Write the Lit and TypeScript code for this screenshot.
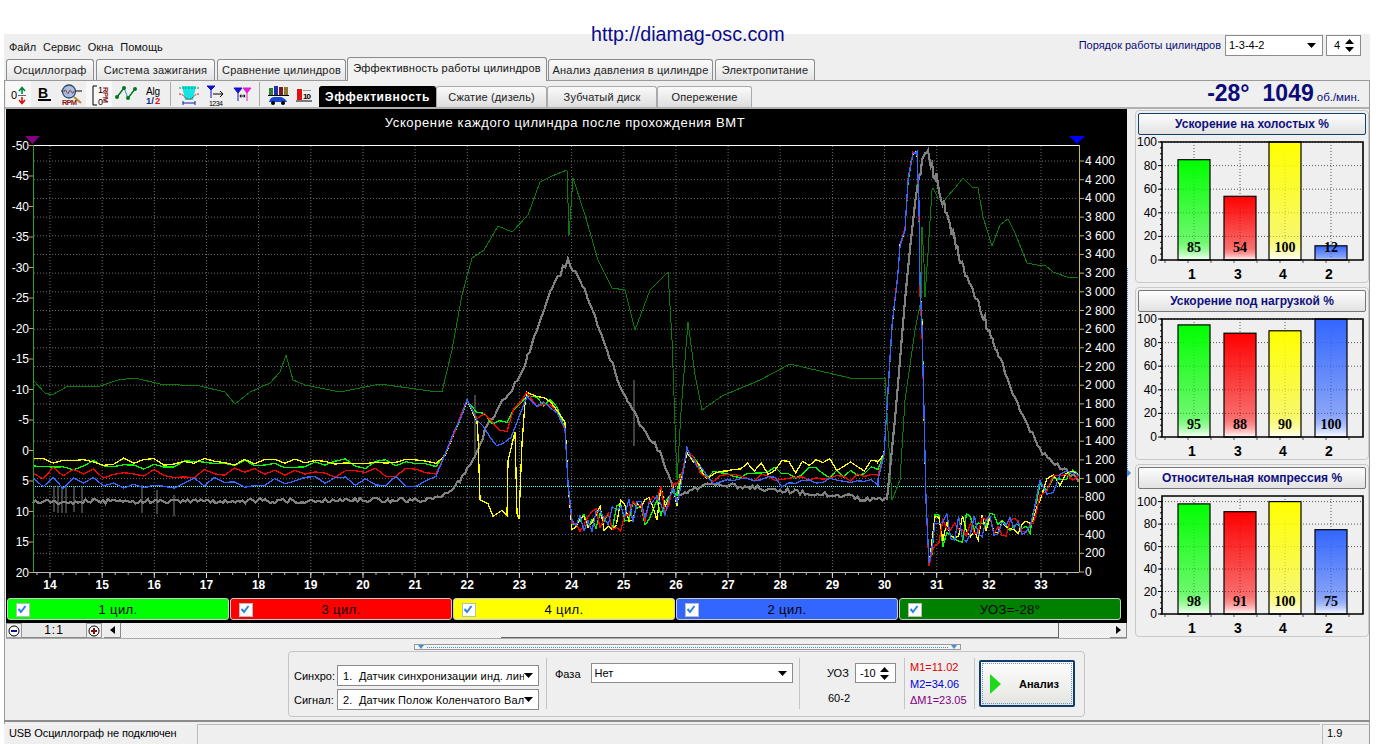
import { LitElement, html, svg, css } from 'lit';
import { customElement, property } from 'lit/decorators.js';

// anchor = [x, y, noise amplitude]
type Anchor = [number, number, number];

function rng(seed: number) {
  return () => {
    seed = (seed + 0x6d2b79f5) | 0;
    let t = Math.imul(seed ^ (seed >>> 15), 1 | seed);
    t = (t + Math.imul(t ^ (t >>> 7), 61 | t)) ^ t;
    return ((t ^ (t >>> 14)) >>> 0) / 4294967296;
  };
}

// walk along the anchors and shake the line a bit, the way the measured signal does
function noisy(anchors: Anchor[], seed: number, stepOf: (x: number) => number) {
  const r = rng(seed);
  const pts: string[] = [];
  for (let i = 0; i < anchors.length - 1; i++) {
    const [x0, y0, n0] = anchors[i];
    const [x1, y1, n1] = anchors[i + 1];
    const step = stepOf(x0);
    const count = Math.max(1, Math.round((x1 - x0) / step));
    for (let k = 0; k < count; k++) {
      const t = k / count;
      const amp = n0 + (n1 - n0) * t;
      const x = x0 + (x1 - x0) * t;
      const y = y0 + (y1 - y0) * t + (r() * 2 - 1) * amp;
      pts.push(`${x.toFixed(1)},${y.toFixed(1)}`);
    }
  }
  const last = anchors[anchors.length - 1];
  pts.push(`${last[0]},${last[1]}`);
  return pts.join(' ');
}

const stepCyl = (x: number) => (x < 440 ? 10 : x > 885 && x < 925 ? 2 : x > 565 && x < 700 ? 4 : x > 925 && x < 1040 ? 4 : 7);
const stepGrey = (x: number) => (x > 890 && x < 1000 ? 1.5 : 2.5);

const riseA: Anchor[] = [
  [445, 455, 1], [455, 430, 2], [467, 402, 3], [477, 417, 5],
];
const midA: Anchor[] = [
  [527, 394, 4], [537, 402, 6], [557, 408, 8], [565, 427, 6], [568, 483, 1],
  [572, 525, 5], [600, 520, 16], [633, 515, 18], [653, 505, 18], [677, 495, 12],
  [683, 470, 4], [687, 450, 3], [697, 465, 4], [707, 478, 3],
];
const peakA = (dy: number): Anchor[] => [
  [878, 476 + dy, 2], [884, 455, 1], [892, 327, 2], [898, 273, 2], [900, 247, 2], [905, 230, 3],
  [908, 180, 3], [913, 153, 1], [917, 152, 1], [919, 207, 6], [920, 287, 10], [922, 327, 6],
  [926, 500, 2], [929, 565, 3],
  [935, 530, 18], [990, 525, 13], [1030, 528, 6], [1040, 490, 12], [1060, 478, 10], [1079, 475, 4],
];

const traces = [
  {
    color: '#00ff00',
    pts: noisy([[33, 466, 6], [436, 463, 5], ...riseA, [507, 422, 8], ...midA, [720, 472, 6], [878, 472, 6], ...peakA(-8)], 11, stepCyl),
  },
  {
    color: '#ffff00',
    pts: noisy([
      [33, 462, 4], [436, 461, 3], ...riseA,
      [478, 437, 1], [480, 500, 1], [488, 503, 1], [493, 517, 1], [502, 510, 1], [507, 515, 1], [508, 460, 1],
      [515, 433, 1], [517, 513, 1], [519, 519, 1], [522, 443, 1], [525, 403, 1],
      ...midA, [720, 468, 8], [878, 465, 7], ...peakA(-14),
    ], 23, stepCyl),
  },
  {
    color: '#ff0000',
    pts: noisy([[33, 473, 6], [436, 472, 5], ...riseA, [507, 425, 8], ...midA, [720, 478, 5], [878, 478, 4], ...peakA(0)], 37, stepCyl),
  },
  {
    color: '#3366ff',
    pts: noisy([[33, 483, 6], [436, 481, 6], ...riseA, [490, 435, 3], [503, 450, 8], ...midA, [720, 482, 6], [878, 482, 5], ...peakA(4)], 53, stepCyl),
  },
];

const greyLine = noisy([
  [33, 502, 2.5], [430, 500, 2.5], [445, 493, 2.5], [460, 482, 3], [475, 455, 3], [490, 420, 3], [505, 398, 3],
  [520, 378, 3], [535, 335, 3], [550, 290, 3], [568, 260, 4], [585, 292, 3], [600, 330, 3], [620, 385, 3],
  [640, 425, 3], [660, 452, 3], [675, 495, 2.5], [690, 490, 2.5], [710, 484, 2.5], [740, 486, 2.5], [800, 492, 2.5],
  [880, 500, 2.5], [887, 498, 1], [895, 420, 1], [905, 300, 1], [915, 200, 4], [925, 150, 7], [935, 175, 7],
  [950, 225, 5], [965, 275, 5], [985, 320, 5], [1000, 358, 4], [1020, 410, 3], [1040, 450, 3], [1060, 466, 3], [1079, 482, 3],
], 71, stepGrey);

const greySpikes: [number, number, number][] = [
  [54, 486, 512], [58, 486, 513], [62, 486, 513], [66, 486, 513], [74, 486, 512], [82, 486, 513],
  [142, 485, 513], [157, 490, 514], [174, 495, 516], [475, 395, 458], [634, 380, 446],
];

const dark: [number, number][] = [
  [33, 380], [45, 393], [52, 395], [68, 386], [100, 386], [118, 380], [135, 378], [160, 384], [200, 386], [225, 392],
  [235, 404], [250, 392], [270, 383], [280, 372], [286, 355], [293, 380], [305, 385], [340, 392], [380, 384], [430, 391],
  [442, 392], [452, 350], [462, 295], [472, 258], [484, 250], [498, 226], [512, 232], [528, 215], [540, 182], [552, 176],
  [567, 170], [569, 235], [573, 178], [585, 215], [598, 260], [612, 288], [625, 290], [635, 330], [650, 290], [668, 272],
  [672, 340], [677, 480], [681, 412], [688, 322], [695, 375], [702, 410], [722, 396], [760, 380], [790, 364], [850, 378],
  [885, 378], [892, 500], [900, 480], [905, 400], [915, 330], [921, 300], [922, 227], [924, 263], [925, 297], [928, 253],
  [932, 190], [933, 188], [938, 198], [943, 203], [947, 197], [955, 188], [963, 178], [972, 187], [978, 188], [983, 217],
  [992, 246], [1000, 225], [1008, 219], [1015, 233], [1027, 263], [1042, 266], [1045, 265], [1053, 272], [1067, 277], [1078, 277],
];

const xLabels = Array.from({ length: 20 }, (_, i) => 14 + i);
const xPos = (n: number) => 50 + (n - 14) * 52.16;
const rpmY = (k: number) => 572 - k * 18.68;
const leftLabels = [-50, -45, -40, -35, -30, -25, -20, -15, -10, -5, 0, 5, 10, 15, 20];

const tabs = [
  ['Осциллограф', 90], ['Система зажигания', 121], ['Сравнение цилиндров', 131],
  ['Эффективность работы цилиндров', 200], ['Анализ давления в цилиндре', 167], ['Электропитание', 102],
] as [string, number][];

const subTabs = [
  ['Эффективность', 117], ['Сжатие (дизель)', 111], ['Зубчатый диск', 110], ['Опережение', 95],
] as [string, number][];

const legend = [
  ['1 цил.', '#00ff00'], ['3 цил.', '#ff0000'], ['4 цил.', '#ffff00'], ['2 цил.', '#3366ff'], ['УОЗ=-28°', '#008000'],
];

const arrowDown = html`<svg class="drop" width="9" height="5" viewBox="0 0 9 5"><path d="M0 0h9L4.5 5z" fill="#000"/></svg>`;
const spinArrows = html`<svg class="spin-arrows" width="11" height="15" viewBox="0 0 11 15"><path d="M1 6h9L5.500 1zM1 9h9l-4.500 5z" fill="#000"/></svg>`;

// toolbar icons, local y = screen y - 82
const icons = [
  svg`<text x="5" y="16.500" font-size="11" fill="#000">0</text><path d="M16 12V6M13 9l3-3.500 3 3.500" stroke="#00863c" stroke-width="1.600" fill="none"/><path d="M12 13.500h8" stroke="#666"/><path d="M16 15v6M13 18l3 3.500 3-3.500" stroke="#e01010" stroke-width="1.600" fill="none"/>`,
  svg`<text x="7" y="15.500" font-size="14" font-weight="700" font-family="Liberation Serif" fill="#000">B</text><rect x="7" y="17" width="13" height="2" fill="#000"/>`,
  svg`<path d="M3 9h21" stroke="#000"/><circle cx="11" cy="9.500" r="6.500" fill="#a9bde0" stroke="#2c4a6a" stroke-width="1.300"/><path d="M6 10c2-7 3 6 5 0s3 6 5-1" stroke="#7a2020" fill="none" stroke-width=".8"/><path d="M16 15l7 6" stroke="#b98a30" stroke-width="2.200"/><text x="4" y="23" font-size="7.500" font-weight="700" fill="#8a1c1c" textLength="15">RPM</text>`,
  svg`<path d="M11 4H7v19h4" stroke="#000" fill="none"/><text x="12" y="11" font-size="9" fill="#000">1</text><text x="12" y="23" font-size="9" fill="#000">0</text><text transform="translate(17,5) rotate(90)" font-size="7.500" font-weight="700" fill="#8a1c1c" textLength="16">RPM</text>`,
  svg`<path d="M5 15L12 6l4 10 7-9" fill="none" stroke="#2f8cc9"/><path d="M5 15L12 6M16 16l7-9" fill="none" stroke="#00761e" stroke-width="1.300"/><circle cx="5" cy="15" r="2" fill="#00761e"/><circle cx="12" cy="6" r="2" fill="#00761e"/><circle cx="16" cy="16" r="2" fill="#00761e"/><circle cx="23" cy="7" r="2" fill="#00761e"/>`,
  svg`<text x="6" y="13" font-size="10" fill="#000" textLength="14">Alg</text><text x="6" y="22" font-size="9.500" font-weight="700" fill="#102c90">1/</text><text x="15" y="22" font-size="9.500" font-weight="700" fill="#e01010">2</text>`,
  svg`<path d="M8 4h14l-3 14H11z" fill="#19e4e4"/><path d="M5 6h20" stroke="#1a8a3a" stroke-dasharray="2 1"/><path d="M5 12c6 0 5 5 10 5s4-5 10-5" stroke="#d01010" fill="none" stroke-dasharray="2 1"/><path d="M9 21h12M9 19v4M21 19v4" stroke="#1020a0"/>`,
  svg`<path d="M4 4h8L8 8zM8 8v8" fill="#1010d0" stroke="#1010d0"/><path d="M10 12h10m-3-3 3 3-3 3" stroke="#000" fill="none"/><text x="6" y="24" font-size="7" fill="#000" textLength="14">1234</text>`,
  svg`<path d="M6 6h8l-4 5zM10 11v8" fill="#1010d0" stroke="#1010d0"/><path d="M15 6h8l-4 5zM19 11v8" fill="#e020d0" stroke="#e020d0"/><path d="M12 14h5m-4-1.500-1 1.500 1 1.500m3-3 1 1.500-1 1.500" stroke="#000" fill="none"/>`,
  svg`<rect x="6" y="6" width="4" height="7" fill="#2e7d32"/><rect x="11" y="4" width="4" height="9" fill="#2030b0"/><rect x="16" y="5" width="4" height="8" fill="#7a1c1c"/><rect x="21" y="5" width="4" height="8" fill="#8a7a30"/><path d="M5 13.500h21" stroke="#000"/><path d="M6 20c1-4 3-5 6-5h5c2 0 6 2 7 5z" fill="#1446d0"/><circle cx="10" cy="21" r="2" fill="#000"/><circle cx="20" cy="21" r="2" fill="#000"/>`,
  svg`<rect x="5" y="7" width="5" height="11" fill="#e01010"/><rect x="11" y="8" width="8" height="1" fill="#999"/><text x="11" y="17" font-size="8" font-weight="700" fill="#000" textLength="8">10</text><path d="M4 19h16" stroke="#000"/>`,
];
const iconSlots: [number, number][] = [
  [25, 0], [27, 1], [28, 2], [26, 3], [28, 4], [30, 5],
];
const iconSlots2: [number, number][] = [[29, 6], [25, 7], [26, 8]];
const iconSlots3: [number, number][] = [[29, 9], [25, 10]];

@customElement('bar-panel')
class BarPanel extends LitElement {
  @property() heading = '';
  @property({ type: Array }) values: number[] = [];
  @property({ type: Number }) plotH = 118;
  @property({ type: Number }) scaleTop = 100;
  @property({ type: Boolean }) focusBtn = false;

  static styles = css`
    :host {
      display: block;
      border: 1px solid #c9c9c9;
      border-radius: 4px;
      padding: 2px 1px 0;
      height: 173px;
      box-sizing: border-box;
    }
    .head {
      height: 22px;
      margin: 0 1px;
      box-sizing: border-box;
      border: 1px solid #777;
      border-radius: 2px;
      background: linear-gradient(#fdfdfd, #e2e2e2);
      color: #10107c;
      font: 700 12px "Liberation Sans", Arial, sans-serif;
      display: flex;
      align-items: center;
      justify-content: center;
    }
    .head.focus { border-color: #10406c; }
    svg { display: block; }
    text { font-family: "Liberation Sans", Arial, sans-serif; }
    .tick { font-size: 12px; fill: #000; text-anchor: end; }
    .cat { font-size: 14px; font-weight: 700; fill: #000; text-anchor: middle; }
    .val { font-family: "Liberation Serif", serif; font-size: 14px; font-weight: 700; fill: #000; text-anchor: middle; }
  `;

  render() {
    const h = this.plotH;
    const base = h + 3;
    const px = h / this.scaleTop;
    const left = 25;
    const right = 226;
    const bars = [41, 87, 132, 178];
    const cats = ['1', '3', '4', '2'];
    const cols = ['#00ff00', '#ff0000', '#ffff00', '#3366ff'];
    const ticks = [0, 20, 40, 60, 80, 100];
    const minor = Array.from({ length: 21 }, (_, i) => i * 5);
    const bottom = Array.from({ length: 9 }, (_, i) => left + 3 + i * 23);
    return html`
      <div class="head ${this.focusBtn ? 'focus' : ''}">${this.heading}</div>
      <svg width="230" height="${h + 30}" viewBox="0 -4 230 ${h + 30}">
        <defs>
          ${cols.map((c, i) => svg`<linearGradient id="g${i}" x1="0" y1="0" x2="0" y2="1"><stop offset="0" stop-color="${c}"/><stop offset=".8" stop-color="${c}" stop-opacity=".55"/><stop offset="1" stop-color="#fff"/></linearGradient>`)}
        </defs>
        ${minor.map((t) => svg`<path d="M${left - 2} ${(base - t * px).toFixed(1)}h2" stroke="#000"/>`)}
        ${bottom.map((x) => svg`<path d="M${x} ${base}v3" stroke="#555"/>`)}
        ${ticks.map((t) => svg`
          <path d="M${left - 4} ${(base - t * px).toFixed(1)}h4" stroke="#000"/>
          ${t > 0 ? svg`<path d="M${left} ${(base - t * px).toFixed(1)}H${right}" stroke="#555" stroke-dasharray="1 2"/>` : ''}
          <text class="tick" x="${left - 5}" y="${(base - t * px + 4).toFixed(1)}">${t}</text>`)}
        ${bars.map((b) => svg`<path d="M${b + 16} 3V${base}" stroke="#555" stroke-dasharray="1 2"/>`)}
        ${this.values.map((v, i) => {
          const t = base - v * px;
          return svg`
            <rect x="${bars[i]}" y="${t.toFixed(1)}" width="32" height="${(base - t).toFixed(1)}" fill="url(#g${i})" stroke="#000" stroke-width="1.200"/>
            <text class="val" x="${bars[i] + 16}" y="${base - 8}">${v}</text>
            <text class="cat" x="${bars[i] + 14}" y="${base + 19}">${cats[i]}</text>`;
        })}
        <path d="M${left} ${base}H${right}V3H${left}Z" fill="none" stroke="#000" stroke-width="1.600"/>
      </svg>
    `;
  }
}

@customElement('app-root')
export class AppRoot extends LitElement {
  static styles = css`
    :host {
      display: block;
      position: relative;
      width: 1382px;
      height: 744px;
      background: #fff;
      overflow: hidden;
      font-family: "Liberation Sans", Arial, sans-serif;
      font-size: 11px;
      color: #000;
      --face: #efefef;
      --line: #9a9a9a;
    }
    .site {
      position: absolute;
      left: 591px;
      top: 23px;
      font-size: 19.700px;
      color: #0a0a8c;
    }
    .app {
      position: absolute;
      left: 4px;
      top: 34px;
      width: 1366px;
      height: 710px;
      background: var(--face);
      display: flex;
      flex-direction: column;
    }
    .top {
      height: 24px;
      display: flex;
      align-items: center;
      padding: 0 9px 0 5px;
      flex: none;
    }
    .menu { display: flex; gap: 7px; margin-top: 2px; color: #111; }
    .order { margin-left: auto; display: flex; align-items: center; gap: 4px; color: #0a0a78; margin-top: -2px; }
    .box {
      background: #fff;
      border: 1px solid #8c8c8c;
      box-sizing: border-box;
      display: flex;
      align-items: center;
      padding: 0 5px 0 3px;
      color: #000;
      white-space: nowrap;
      overflow: hidden;
    }
    .box span { flex: 1; overflow: hidden; }
    .order .sel { width: 98px; height: 21px; margin-right: -1px; }
    .order .sel .drop { margin-right: 1px; }
    .order .num { width: 35px; height: 21px; padding-left: 7px; }
    .tabs { display: flex; height: 22px; padding-left: 2px; gap: 0; flex: none; align-items: flex-end; }
    .tab {
      height: 21px;
      box-sizing: border-box;
      margin-right: 2px;
      border: 1px solid #8c8c8c;
      border-bottom: 0;
      border-radius: 3px 3px 0 0;
      background: linear-gradient(#fbfbfb, #e4e4e4);
      display: flex;
      align-items: center;
      justify-content: center;
      letter-spacing: 0.2px;
      color: #222;
    }
    .tab.on { height: 24px; background: #f2f2f2; margin: 0 1px 0 -1px; position: relative; z-index: 1; color: #111; padding-bottom: 3px; margin-bottom: -1px; }
    .page {
      flex: 1;
      min-height: 0;
      border: 1px solid var(--line);
      border-width: 1px 1px 0 1px;
      display: flex;
      flex-direction: column;
    }
    .tools {
      height: 28px;
      box-sizing: border-box;
      flex: none;
      display: flex;
      align-items: flex-end;
      border-bottom: 2px solid #b0b0b0;
      padding-left: 1px;
    }
    .tool { height: 26px; display: flex; align-items: center; justify-content: center; }
    .tool svg { display: block; }
    .tool.pressed { background: #f8f8f8; }
    .tool text { font-family: "Liberation Sans", Arial, sans-serif; }
    .sep { width: 1px; height: 24px; background: #aaa; margin: 0 3px 1px 0; }
    .sep.next { margin-left: 5px; }
    .sub {
      height: 21px;
      box-sizing: border-box;
      border: 1px solid #aaa;
      border-bottom: 0;
      border-radius: 3px 3px 0 0;
      background: linear-gradient(#fafafa, #dedede);
      display: flex;
      align-items: center;
      justify-content: center;
      color: #222;
      letter-spacing: .15px;
    }
    .sub.on { background: #000; color: #fff; font-weight: 700; font-size: 12px; letter-spacing: .6px; border-color: #000; }
    .rpm { margin-left: auto; display: flex; align-items: baseline; color: #0a0a78; font-weight: 700; font-size: 23px; padding-right: 9px; height: 27px; margin-top: -1px; align-self: flex-start; }
    .rpm b { margin-left: 13px; }
    .rpm small { font-size: 11.500px; font-weight: 400; margin-left: 3px; }
    .main { display: flex; flex: none; height: 530px; padding-left: 1px; }
    .scope { width: 1121px; flex: none; background: #000; display: flex; flex-direction: column; height: 514px; }
    .scope h1 {
      margin: 0;
      height: 27px;
      flex: none;
      font-size: 13px;
      font-weight: 400;
      color: #fff;
      text-align: center;
      letter-spacing: .61px;
      line-height: 27px;
      padding-right: 3px;
    }
    .scope svg { display: block; flex: none; }
    .scope text { font-family: "Liberation Sans", Arial, sans-serif; }
    .ax-l { font-size: 12px; fill: #fff; text-anchor: end; }
    .ax-r { font-size: 12px; fill: #fff; }
    .ax-b { font-size: 12px; fill: #fff; font-weight: 700; text-anchor: middle; }
    .legend { display: grid; grid-template-columns: repeat(5, 222px); gap: 1px; padding: 1px 0 0 1px; }
    .leg {
      height: 22px;
      box-sizing: border-box;
      border: 1px solid #ccc;
      border-radius: 3px;
      display: flex;
      align-items: center;
      font-size: 13px;
      letter-spacing: .4px;
      position: relative;
      justify-content: center;
    }
    .check {
      position: absolute;
      left: 8px;
      top: 4px;
      width: 12px;
      height: 12px;
      background: #fff;
      border: 1px solid #bbb;
    }
    .check svg { display: block; }
    .scroller {
      width: 1121px;
      height: 16px;
      display: flex;
      align-items: stretch;
      background: #efefef;
      box-sizing: border-box;
      border-bottom: 1px solid #aaa;
    }
    .rnd { width: 16px; display: flex; align-items: center; justify-content: center; border: 1px solid #999; box-sizing: border-box; background: #eee; }
    .scale { width: 64px; text-align: center; background: #e8e8e8; border-bottom: 1px solid #888; font-size: 12px; letter-spacing: 1px; line-height: 15px; }
    .arr { width: 17px; display: flex; align-items: center; justify-content: center; background: #eee; border: 1px solid #888; border-width: 0 1px 1px 0; box-sizing: border-box; }
    .track {
      flex: 1;
      background-image: repeating-conic-gradient(#f8f8f8 0 25%, #e8e8e8 0 50%);
      background-size: 2px 2px;
      display: flex;
    }
    .thumb { margin-left: 380px; width: 558px; background: #f0f0f0; border: 1px solid #666; border-width: 0 1px 1px 0; box-sizing: border-box; }
    .split { width: 8px; flex: none; position: relative; }
    .split i { position: absolute; left: 0; top: 159px; height: 205px; border-left: 1px dotted #3f8fe0; }
    .split u { position: absolute; left: 0; top: 360px; border-left: 4px solid #3f8fe0; border-top: 4px solid transparent; border-bottom: 4px solid transparent; }
    .side { width: 234px; flex: none; display: flex; flex-direction: column; gap: 4px; padding-top: 1px; }
    .lower { position: relative; flex: 1; min-height: 0; }
    .grip {
      position: absolute;
      left: 409px;
      top: 5px;
      width: 547px;
      height: 6px;
      box-sizing: border-box;
      border: 1px solid #999;
      display: flex;
      justify-content: space-between;
      align-items: center;
      padding: 0 3px;
      background: #f4f4f4;
    }
    .grip i { flex: 1; margin: 0 3px; border-top: 1px dotted #3f8fe0; }
    .grip u { border-top: 4px solid #3f8fe0; border-left: 3px solid transparent; border-right: 3px solid transparent; }
    .group {
      position: absolute;
      left: 283px;
      top: 12px;
      width: 797px;
      height: 66px;
      box-sizing: border-box;
      border: 1px solid #c4c4c4;
      border-radius: 4px;
      display: flex;
    }
    .cell { border-right: 1px solid #c4c4c4; margin: 6px 0 7px; box-sizing: border-box; flex: none; }
    .sync { width: 258px; display: grid; grid-template-columns: 43px 202px; row-gap: 3px; padding: 7px 0 0 5px; align-items: center; align-content: start; }
    .sync .box, .phase .box { height: 21px; }
    .sync .box span { padding-left: 2px; letter-spacing: .15px; }
    .phase { width: 253px; display: flex; gap: 10px; padding: 5px 0 0 8px; }
    .phase label { margin-top: 5px; }
    .phase .box { width: 202px; height: 20px; }
    .uoz { width: 105px; display: grid; grid-template-columns: 28px 42px; align-content: start; padding: 5px 0 0 27px; column-gap: 0; align-items: center; row-gap: 9px; }
    .uoz .box { height: 20px; padding-left: 4px; width: 41px; }
    .uoz .box span { letter-spacing: -.2px; }
    .uoz .code { grid-column: 1 / 3; padding-left: 1px; }
    .ms { width: 70px; padding: 1px 0 0 5px; line-height: 16.500px; white-space: nowrap; }
    .ms div:nth-child(1) { color: #e00000; }
    .ms div:nth-child(2) { color: #0000d8; }
    .ms div:nth-child(3) { color: #800080; }
    .go {
      margin: 8px 0 0 4px;
      width: 96px;
      height: 47px;
      box-sizing: border-box;
      border: 2px solid #103c6c;
      border-radius: 2px;
      background: linear-gradient(#fdfdfd, #e4e4e0);
      outline: 1px dotted #7090c0;
      outline-offset: -4px;
      display: flex;
      align-items: center;
      font-weight: 700;
      padding-left: 9px;
      gap: 17px;
    }
    .status { position: absolute; left: -1px; right: -1px; top: 81px; height: 24px; border-top: 2px solid #8c8c8c; display: flex; padding-top: 2px; }
    .st { height: 22px; box-sizing: border-box; border-top: 1px solid #bbb; border-left: 1px solid #bbb; padding: 2px 0 0 4px; white-space: nowrap; }
    .st.a { width: 190px; letter-spacing: -.1px; border-color: #f4f4f4; }
    .st.b { flex: 1; margin-left: 3px; }
    .st.c { width: 48px; margin-left: 2px; }
  `;

  private tool(w: number, i: number, pressed = false) {
    return html`<div class="tool ${pressed ? 'pressed' : ''}" style="width:${w}px"><svg width="${w}" height="25" viewBox="0 0 ${w} 25">${icons[i]}</svg></div>`;
  }

  private plot() {
    const vert = xLabels.map((n) => xPos(n));
    const minor: number[] = [];
    for (let x = 50 - 52.16 / 4; x < 1079; x += 52.16 / 4) minor.push(x);
    const rpm = Array.from({ length: 23 }, (_, k) => k);
    return svg`
      <svg width="1121" height="461" viewBox="6 136 1121 461">
        ${vert.map((x) => svg`<path d="M${x.toFixed(1)} 146V571" stroke="#6e6e6e" stroke-dasharray="1 2"/>`)}
        ${rpm.slice(1).map((k) => svg`<path d="M34 ${rpmY(k).toFixed(1)}H1078" stroke="#6e6e6e" stroke-dasharray="1 2"/>`)}
        <path d="M33 486.500H1079" stroke="#5ff" stroke-dasharray="1 1"/>
        <polyline points="${dark.map((p) => p.join(',')).join(' ')}" fill="none" stroke="#0d7a0d" stroke-width="1" shape-rendering="crispEdges"/>
        ${greySpikes.map(([x, a, b]) => svg`<path d="M${x} ${a}V${b}" stroke="#808080"/>`)}
        <polyline points="${greyLine}" fill="none" stroke="#808080" stroke-width="2.200" shape-rendering="crispEdges"/>
        ${traces.map((t) => svg`<polyline points="${t.pts}" fill="none" stroke="${t.color}" stroke-width="1.300" shape-rendering="crispEdges"/>`)}
        <path d="M33 145.500H1079" stroke="#fff"/>
        <path d="M33 572.500H1079" stroke="#bbb"/>
        <path d="M33.500 145V572" stroke="#2aa02a"/>
        <path d="M1079.500 145V572" stroke="#c8b850"/>
        ${minor.filter((x) => x > 33 && x < 1079).map((x) => svg`<path d="M${x.toFixed(1)} 573v2" stroke="#bbb"/>`)}
        ${vert.map((x) => svg`<path d="M${x.toFixed(1)} 573v5" stroke="#ddd"/>`)}
        ${leftLabels.map((v, i) => {
          const y = 145.500 + i * 30.5;
          return svg`<path d="M29 ${y}h4" stroke="#c8a060"/><text class="ax-l" x="29" y="${y + 4}">${v}</text>`;
        })}
        ${rpm.slice(0, 24).map((k) => {
          const v = k * 200;
          const label = v >= 1000 ? `${Math.floor(v / 1000)} ${String(v % 1000).padStart(3, '0')}` : `${v}`;
          return svg`<path d="M1079 ${rpmY(k).toFixed(1)}h5" stroke="#c8b850"/><text class="ax-r" x="1085" y="${(rpmY(k) + 4).toFixed(1)}">${label}</text>`;
        })}
        ${xLabels.map((n) => svg`<text class="ax-b" x="${xPos(n).toFixed(1)}" y="589">${n}</text>`)}
        <path d="M25 136h15l-7.500 8z" fill="#800080"/>
        <path d="M1069 136h16l-8 8z" fill="#0000ff"/>
      </svg>
    `;
  }

  render() {
    return html`
      <div class="app">
        <div class="top">
          <div class="menu"><span>Файл</span><span>Сервис</span><span>Окна</span><span>Помощь</span></div>
          <div class="order">
            <span>Порядок работы цилиндров</span>
            <div class="box sel"><span>1-3-4-2</span>${arrowDown}</div>
            <div class="box num"><span>4</span>${spinArrows}</div>
          </div>
        </div>
        <div class="tabs">
          ${tabs.map(([t, w], i) => html`<div class="tab ${i === 3 ? 'on' : ''}" style="width:${i === 3 ? w : w - 2}px">${t}</div>`)}
        </div>
        <div class="page">
          <div class="tools">
            ${iconSlots.map(([w, i]) => this.tool(w, i, i === 0 || i === 3))}
            <div class="sep"></div>
            ${iconSlots2.map(([w, i]) => this.tool(w, i))}
            <div class="sep next"></div>
            ${iconSlots3.map(([w, i]) => this.tool(w, i))}
            <div style="width:2px"></div>
            ${subTabs.map(([t, w], i) => html`<div class="sub ${i === 0 ? 'on' : ''}" style="width:${w}px">${t}</div>`)}
            <div class="rpm"><span>-28°</span><b>1049</b><small>об./мин.</small></div>
          </div>
          <div class="main">
            <div>
              <div class="scope">
                <h1>Ускорение каждого цилиндра после прохождения ВМТ</h1>
                ${this.plot()}
                <div class="legend">
                  ${legend.map(([t, c]) => html`<div class="leg" style="background:${c}">
                    <div class="check"><svg width="10" height="10" viewBox="0 0 10 10"><path d="M1.500 5l2.500 3 4.500-6" fill="none" stroke="#2f80e0" stroke-width="2"/></svg></div>${t}</div>`)}
                </div>
              </div>
              <div class="scroller">
                <div class="rnd"><svg width="12" height="12" viewBox="0 0 12 12"><circle cx="6" cy="6" r="5" fill="#fff" stroke="#000"/><path d="M3 6h6" stroke="#10108c" stroke-width="2"/></svg></div>
                <div class="scale">1:1</div>
                <div class="rnd"><svg width="12" height="12" viewBox="0 0 12 12"><circle cx="6" cy="6" r="5" fill="#fff" stroke="#000"/><path d="M3 6h6M6 3v6" stroke="#7c1010" stroke-width="2"/></svg></div>
                <div style="width:2px"></div>
                <div class="arr"><svg width="5" height="8" viewBox="0 0 5 8"><path d="M5 0v8L0 4z"/></svg></div>
                <div class="track"><div class="thumb"></div></div>
                <div class="arr"><svg width="5" height="8" viewBox="0 0 5 8"><path d="M0 0v8l5-4z"/></svg></div>
              </div>
            </div>
            <div class="split"><i></i><u></u></div>
            <div class="side">
              <bar-panel heading="Ускорение на холостых %" .values=${[85, 54, 100, 12]} .focusBtn=${true}></bar-panel>
              <bar-panel heading="Ускорение под нагрузкой %" .values=${[95, 88, 90, 100]}></bar-panel>
              <bar-panel heading="Относительная компрессия %" .values=${[98, 91, 100, 75]} .scaleTop=${105}></bar-panel>
            </div>
          </div>
          <div class="lower">
            <div class="grip"><u></u><i></i><u></u></div>
            <div class="group">
              <div class="cell sync">
                <label>Синхро:</label><div class="box"><span>1.&nbsp; Датчик синхронизации инд. лин</span>${arrowDown}</div>
                <label>Сигнал:</label><div class="box"><span>2.&nbsp; Датчик Полож Коленчатого Вал</span>${arrowDown}</div>
              </div>
              <div class="cell phase">
                <label>Фаза</label>
                <div class="box"><span>Нет</span>${arrowDown}</div>
              </div>
              <div class="cell uoz">
                <label>УОЗ</label>
                <div class="box"><span>-10</span>${spinArrows}</div>
                <div class="code">60-2</div>
              </div>
              <div class="cell ms"><div>M1=11.02</div><div>M2=34.06</div><div>ΔM1=23.05</div></div>
              <div class="go"><svg width="12" height="20" viewBox="0 0 12 20"><path d="M0 0l11 10L0 20z" fill="#1ed81e"/></svg><span>Анализ</span></div>
            </div>
            <div class="status">
              <div class="st a">USB Осциллограф не подключен</div>
              <div class="st b"></div>
              <div class="st c">1.9</div>
            </div>
          </div>
        </div>
      </div>
      <div class="site">http://diamag-osc.com</div>
    `;
  }
}

void BarPanel;
